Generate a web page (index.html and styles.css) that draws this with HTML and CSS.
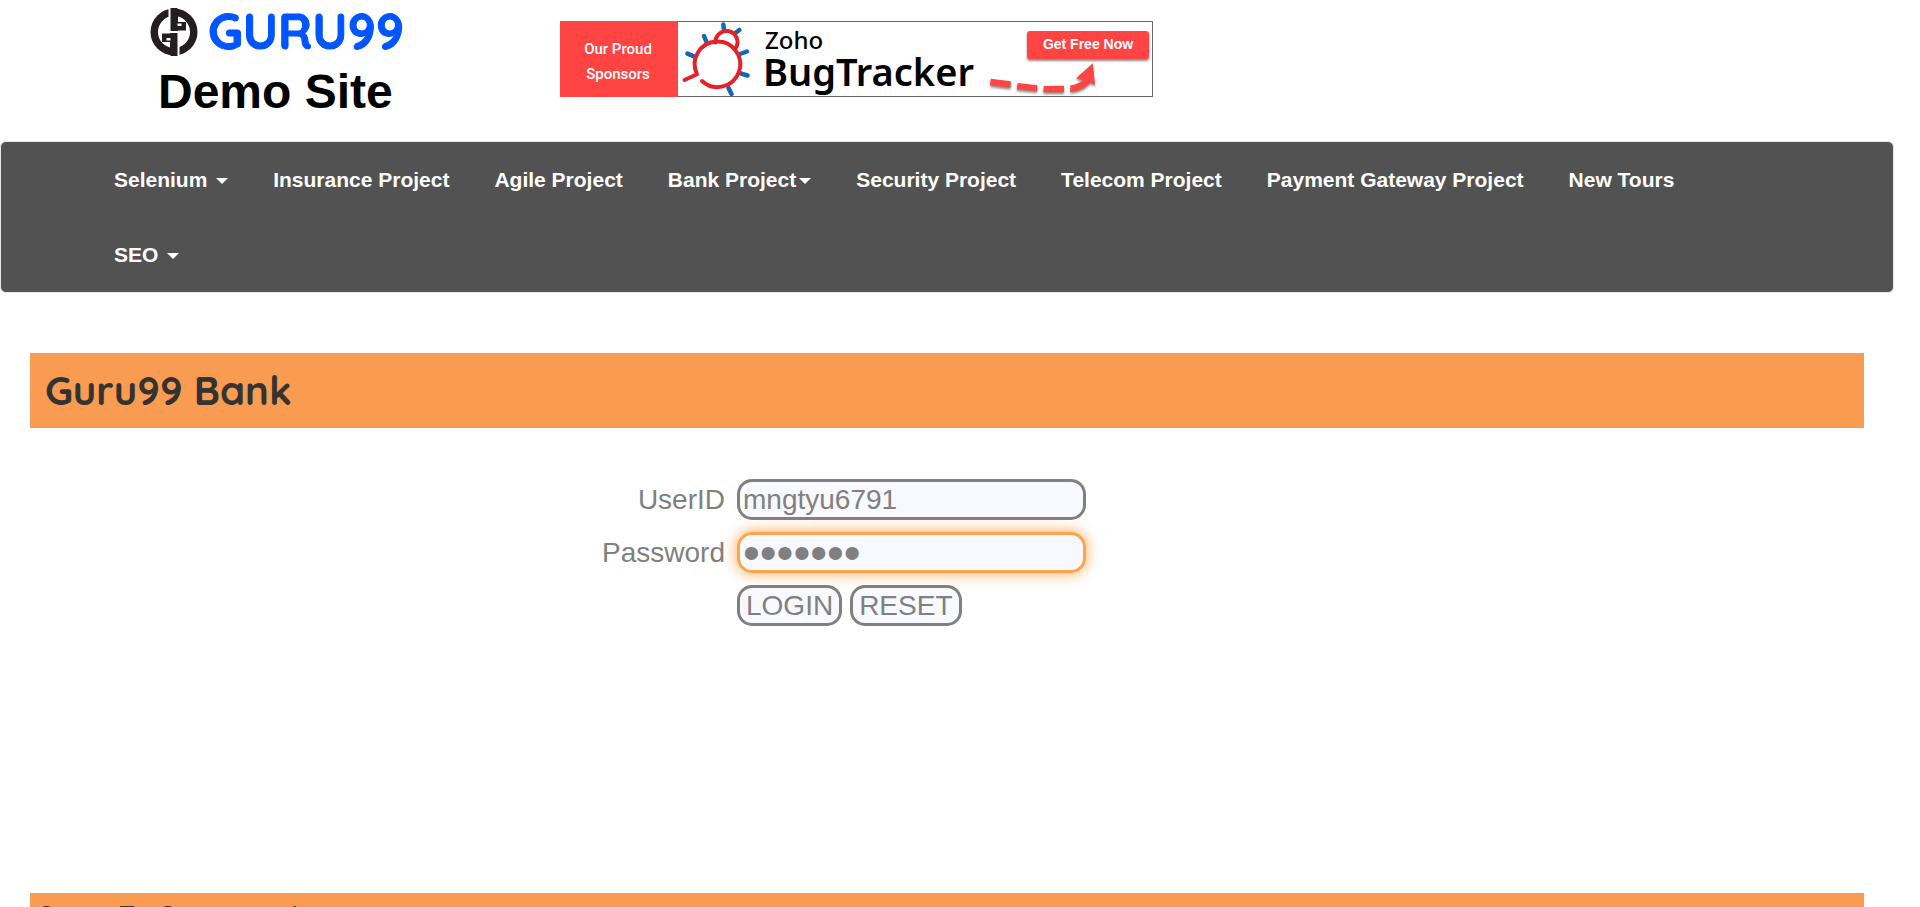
FILE: index.html
```html
<!DOCTYPE html>
<html lang="en">
<head>
<meta charset="utf-8">
<meta name="viewport" content="width=device-width, initial-scale=1">
<title>Guru99 Bank Home Page</title>
<link rel="stylesheet" href="styles.css">
</head>
<body>
<header class="site-header">
  <div class="brand">
    <a class="brand-logo" href="#">
      <svg class="brand-mark" viewBox="0 0 48 48" aria-hidden="true">
        <circle cx="24" cy="24" r="23.500" fill="#231f20"/>
        <path d="M20 8.500A16 16 0 0 0 20 39.500zM28 8.500A16 16 0 0 1 28 39.500z" fill="#fff"/>
        <path d="M20 0h7.500v14H36v8.500H20z" fill="#231f20"/>
        <path d="M28 48h-7.500V34H12v-8.500h16z" fill="#231f20"/>
        <path d="M19.500 0v24h9v24" fill="none" stroke="#fff" stroke-width="2"/>
        <path d="M27.500 15.500h4v2.500h-4zM16.500 30h4v2.500h-4z" fill="#fff"/>
      </svg>
      <span class="brand-name">GURU99</span>
    </a>
    <h2 class="brand-title">Demo Site</h2>
  </div>
  <a class="sponsor" href="#">
    <svg class="sponsor-art" viewBox="0 0 593 76" role="img" aria-label="Our Proud Sponsors: Zoho BugTracker">
      <rect x=".5" y=".5" width="592" height="75" fill="#fff" stroke="#666"/>
      <rect width="118" height="76" fill="#ff4444"/>
      <g class="sponsor-label" text-anchor="middle">
        <text x="58" y="33">Our Proud</text>
        <text x="58" y="58">Sponsors</text>
      </g>
      <g fill="none" stroke="#1668b3" stroke-width="4.500" stroke-linecap="round">
        <path d="M163.300 3.500l.7 5M179.300 9l-3.300 2.500M144 15l2.500 6M127.500 32.700l6.500 2.600M187 30.500l-7 2.500M187.500 54.500l-7-2.200M168.500 67l3 6"/>
      </g>
      <g fill="none" stroke="#e62129" stroke-width="4" stroke-linecap="round" stroke-linejoin="round">
        <path d="M142 60A22.800 22.800 0 1 0 137 53.300L124.500 59"/>
        <path d="M155.500 21.500A11 11 0 1 1 176 26.500"/>
      </g>
      <text class="zoho" x="205" y="28">Zoho</text>
      <text class="tracker" x="203" y="65">BugTracker</text>
      <g class="lifted" fill="#ff4444">
        <rect x="467" y="10" width="122" height="28" rx="3"/>
        <path d="M430.700 57.700L451 60.300l-.7 6.400L430 64.300zM457.700 62l19.600 2.300-.3 6-20.300-2zM483.700 65l20.300-.3v6.600h-20.700zM510.300 64.300Q518 63.500 523 59L516 57.300 532.700 42.300 535 64l-4.500-2.500Q523 70 510.300 71z"/>
      </g>
      <text class="get-free" x="528" y="28" text-anchor="middle">Get Free Now</text>
    </svg>
  </a>
</header>

<nav class="navbar">
  <ul class="nav-list">
    <li><a href="#">Selenium <span class="caret"></span></a></li>
    <li><a href="#">Insurance Project</a></li>
    <li><a href="#">Agile Project</a></li>
    <li><a href="#">Bank Project<span class="caret"></span></a></li>
    <li><a href="#">Security Project</a></li>
    <li><a href="#">Telecom Project</a></li>
    <li><a href="#">Payment Gateway Project</a></li>
    <li><a href="#">New Tours</a></li>
    <li><a href="#">SEO <span class="caret"></span></a></li>
  </ul>
</nav>

<main class="content">
  <h1 class="bar bank-title">Guru99 Bank</h1>
  <form class="login">
    <label for="uid">UserID</label>
    <input class="field" id="uid" type="text" value="mngtyu6791">
    <label for="pwd">Password</label>
    <input class="field field-active" id="pwd" type="password" value="secret7">
    <div class="actions">
      <button class="btn" type="submit">LOGIN</button>
      <button class="btn" type="reset">RESET</button>
    </div>
  </form>
  <h2 class="bar steps-title">Steps To Generate Access</h2>
</main>
</body>
</html>
```
FILE: styles.css
```css
* {
  box-sizing: border-box;
}

html {
  height: 100%;
  overflow: hidden;
}

body {
  height: 100%;
  margin: 0;
  padding-right: 26px;
  overflow: hidden;
  background: #fff;
  color: #333;
  font-family: "Liberation Sans", Arial, sans-serif;
}

a {
  text-decoration: none;
}

.site-header {
  display: flex;
  align-items: flex-start;
  gap: 156px;
  padding: 8px 0 22px 150px;
}

.brand {
  flex: 0 0 253px;
  color: #000;
}

.brand-logo {
  display: flex;
  align-items: center;
  gap: 10px;
  height: 48px;
}

.brand-mark {
  width: 48px;
  height: 48px;
}

.brand-name {
  padding-bottom: 2px;
  color: #0055ff;
  font: 700 50px/46px Quicksand, Lato, sans-serif;
  -webkit-text-stroke: 1px #0055ff;
}

.brand-title {
  margin: 8px 0 0 8px;
  font-size: 48px;
  line-height: 55px;
}

.sponsor {
  margin-top: 13px;
}

.sponsor-art {
  display: block;
  width: 593px;
  height: 76px;
}

.sponsor-label {
  fill: #fff;
  font: 500 15px Roboto, sans-serif;
}

.zoho {
  font: 500 24px "Noto Sans", sans-serif;
}

.tracker {
  font: 600 38px "Noto Sans", sans-serif;
}

.lifted {
  filter: drop-shadow(0 2px 1px rgba(0, 0, 0, 0.45));
}

.get-free {
  fill: #fff;
  font: 700 14px "Liberation Sans", Arial, sans-serif;
}

.navbar {
  padding: 0 113px;
  border: 1px solid #e7e7e7;
  border-radius: 6px;
  background: #525252;
}

.nav-list {
  display: flex;
  flex-wrap: wrap;
  column-gap: 45px;
  margin: 0;
  padding: 0;
  list-style: none;
}

.nav-list a {
  display: block;
  color: #fff;
  font-size: 21px;
  font-weight: 700;
  line-height: 75px;
}

.caret {
  display: inline-block;
  margin-left: 3px;
  border-top: 6px solid;
  border-right: 6px solid transparent;
  border-left: 6px solid transparent;
  vertical-align: middle;
}

.content {
  padding: 60px 30px 0;
}

.bar {
  margin: 0;
  background: #f99b50;
  font-family: Quicksand, Lato, sans-serif;
  font-weight: 700;
}

.bank-title {
  padding: 0 15px;
  font-size: 40px;
  line-height: 75px;
}

.login {
  display: grid;
  grid-template-columns: 695px 349px;
  gap: 12px;
  align-items: center;
  padding: 51px 0 267px;
  color: #808080;
  font-size: 28px;
  line-height: 35px;
  text-align: right;
}

.field,
.btn {
  height: 41px;
  border: 3px solid #808080;
  border-radius: 15px;
  background: #f8f8ff;
  color: #808080;
  font: 28px/35px "Liberation Sans", Arial, sans-serif;
}

.field {
  width: 100%;
  padding: 0 3px;
  outline: 0;
}

.field-active {
  border-color: #ffa550;
  box-shadow: 0 0 15px #ffa550;
  font-size: 48px;
}

.actions {
  display: flex;
  grid-column: 2;
  gap: 8px;
}

.btn {
  padding: 0 6px;
}

.steps-title {
  padding: 5px 8px;
  font-size: 27px;
  line-height: 34px;
}
```
